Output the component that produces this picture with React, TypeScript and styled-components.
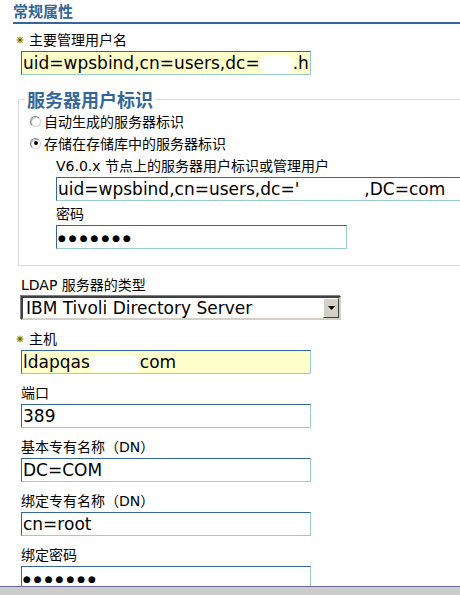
import React from 'react';
import styled, { createGlobalStyle } from 'styled-components';

const GlobalStyle = createGlobalStyle`
  html, body {
    margin: 0;
    padding: 0;
    background: #ffffff;
  }
  body {
    font-family: "DejaVu Sans", "Noto Sans CJK SC", sans-serif;
    color: #000000;
  }
`;

const Page = styled.div`
  width: 460px;
  height: 595px;
  display: flex;
  flex-direction: column;
  overflow: hidden;
`;

const Content = styled.div`
  flex: 1;
  overflow: hidden;
`;

const StatusBar = styled.div`
  height: 8px;
  border-top: 1px solid #666699;
  background: #cccccc;
`;

const Heading = styled.h2`
  margin: 0 0 0 13px;
  font-family: "Noto Sans CJK SC", sans-serif;
  font-size: 15px;
  font-weight: bold;
  line-height: 22px;
  color: #336699;
  border-bottom: 2px solid #336699;
`;

const Field = styled.div<{ $top: number }>`
  margin: ${(p) => p.$top}px 0 0 21px;
`;

const Label = styled.div<{ $required?: boolean }>`
  display: flex;
  align-items: center;
  height: 18px;
  margin: 0 0 2px ${(p) => (p.$required ? -5 : 0)}px;
  font-size: 14px;
  line-height: 18px;
  white-space: nowrap;
`;

const Star = styled.svg`
  width: 8px;
  height: 8px;
  margin-right: 5px;
  flex: none;
`;

const TextBox = styled.div<{ $width: number; $required?: boolean }>`
  box-sizing: border-box;
  width: ${(p) => p.$width}px;
  height: 24px;
  padding: 0 1px;
  border: 1px solid;
  border-color: #336699 #99cccc #99cccc #336699;
  background: ${(p) => (p.$required ? '#ffffcc' : '#ffffff')};
  font-size: 17px;
  line-height: 22px;
  white-space: nowrap;
  overflow: hidden;
`;

const Redact = styled.span<{ $w: number; $blank?: boolean }>`
  display: inline-block;
  width: ${(p) => p.$w}px;
  height: 17px;
  vertical-align: middle;
  border-radius: 7px;
  background: ${(p) => (p.$blank ? 'transparent' : '#ffffff')};
`;

const Dots = styled.span`
  font-size: 9px;
  letter-spacing: 3px;
  vertical-align: middle;
`;

const Select = styled.div`
  box-sizing: border-box;
  display: flex;
  align-items: center;
  width: 320px;
  height: 24px;
  border-style: solid;
  border-width: 2px;
  border-color: #404040 #d4d0c8 #d4d0c8 #404040;
  box-shadow: -1px -1px 0 #808080, 1px 1px 0 #ffffff;
  background: #ffffff;
  font-size: 17px;
  padding-left: 3px;
  white-space: nowrap;
`;

const DropButton = styled.div`
  box-sizing: border-box;
  display: flex;
  align-items: center;
  justify-content: center;
  margin-left: auto;
  width: 16px;
  height: 20px;
  background: #d4d0c8;
  border: 1px solid;
  border-color: #ffffff #404040 #404040 #ffffff;
`;

const Group = styled.fieldset`
  width: 470px;
  min-width: 0;
  margin: 13px 0 0 18px;
  padding: 0 0 16px 0;
  border: 1px solid #dddddd;
`;

const Legend = styled.legend`
  margin-left: 6px;
  padding: 0 2px;
  font-family: "Noto Sans CJK SC", sans-serif;
  font-size: 18px;
  font-weight: bold;
  line-height: 22px;
  color: #336699;
`;

const RadioRow = styled.div`
  display: flex;
  align-items: center;
  gap: 3px;
  height: 22px;
  margin-left: 11px;
  font-size: 14px;
  white-space: nowrap;
`;

const Radio = styled.span<{ $checked?: boolean }>`
  box-sizing: border-box;
  display: flex;
  align-items: center;
  justify-content: center;
  width: 11px;
  height: 11px;
  border-radius: 50%;
  border: 1px solid;
  border-color: #808080 #d0d0d0 #d0d0d0 #808080;
  background: #ffffff;
  box-shadow: inset 1px 1px 0 #c8c8c8;

  &::after {
    content: '';
    width: 4px;
    height: 4px;
    border-radius: 50%;
    background: ${(p) => (p.$checked ? '#000000' : 'transparent')};
  }
`;

const SubBlock = styled.div<{ $top: number }>`
  margin: ${(p) => p.$top}px 0 0 37px;
`;

function RequiredStar() {
  return (
    <Star viewBox="0 0 8 8">
      <g stroke="#8f8a00" strokeWidth="1.1">
        <line x1="4" y1="0.5" x2="4" y2="7.5" />
        <line x1="0.5" y1="4" x2="7.5" y2="4" />
        <line x1="1.5" y1="1.5" x2="6.5" y2="6.5" />
        <line x1="6.5" y1="1.5" x2="1.5" y2="6.5" />
      </g>
      <circle cx="4" cy="4" r="1.3" fill="#5c5800" />
    </Star>
  );
}

export default function App() {
  return (
    <Page>
      <GlobalStyle />
      <Content>
        <Heading>常规属性</Heading>

        <Field $top={7}>
          <Label $required>
            <RequiredStar />
            主要管理用户名
          </Label>
          <TextBox $width={290} $required>
            uid=wpsbind,cn=users,dc=<Redact $w={33} />.hu
          </TextBox>
        </Field>

        <Group>
          <Legend>服务器用户标识</Legend>
          <RadioRow>
            <Radio />
            自动生成的服务器标识
          </RadioRow>
          <RadioRow>
            <Radio $checked />
            存储在存储库中的服务器标识
          </RadioRow>
          <SubBlock $top={3}>
            <Label>V6.0.x 节点上的服务器用户标识或管理用户</Label>
            <TextBox $width={420}>
              uid=wpsbind,cn=users,dc='<Redact $w={65} $blank />,DC=com
            </TextBox>
          </SubBlock>
          <SubBlock $top={4}>
            <Label>密码</Label>
            <TextBox $width={291}>
              <Dots>●●●●●●●</Dots>
            </TextBox>
          </SubBlock>
        </Group>

        <Field $top={10}>
          <Label>LDAP 服务器的类型</Label>
          <Select>
            IBM Tivoli Directory Server
            <DropButton>
              <svg width="7" height="4" viewBox="0 0 7 4">
                <path d="M0 0h7L3.5 4z" fill="#000000" />
              </svg>
            </DropButton>
          </Select>
        </Field>

        <Field $top={10}>
          <Label $required>
            <RequiredStar />
            主机
          </Label>
          <TextBox $width={290} $required>
            ldapqas<Redact $w={50} />com
          </TextBox>
        </Field>

        <Field $top={10}>
          <Label>端口</Label>
          <TextBox $width={290}>389</TextBox>
        </Field>

        <Field $top={10}>
          <Label>基本专有名称（DN）</Label>
          <TextBox $width={290}>DC=COM</TextBox>
        </Field>

        <Field $top={10}>
          <Label>绑定专有名称（DN）</Label>
          <TextBox $width={290}>cn=root</TextBox>
        </Field>

        <Field $top={10}>
          <Label>绑定密码</Label>
          <TextBox $width={290}>
            <Dots>●●●●●●●</Dots>
          </TextBox>
        </Field>
      </Content>
      <StatusBar />
    </Page>
  );
}
